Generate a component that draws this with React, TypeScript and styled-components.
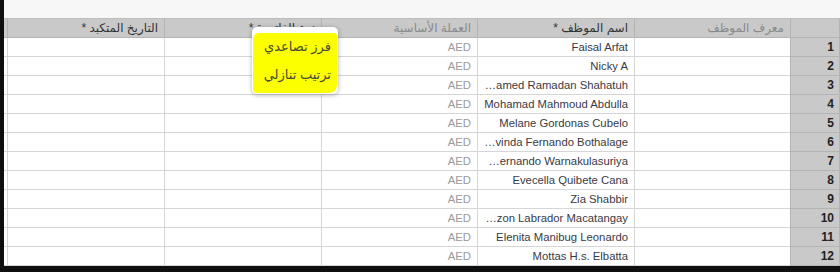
import React from 'react';
import styled, { createGlobalStyle } from 'styled-components';

const GlobalStyle = createGlobalStyle`
  html, body {
    margin: 0;
    padding: 0;
    background: #0f0f0f;
  }
  body {
    font-family: "Liberation Sans", "DejaVu Sans", Arial, sans-serif;
  }
`;

const Frame = styled.div`
  width: 840px;
  height: 272px;
  background: #0f0f0f;
  display: flex;
  justify-content: flex-end;
  align-items: flex-start;
`;

const Sheet = styled.div`
  position: relative;
  width: 836px;
  height: 266px;
  overflow: hidden;
  background: #f7f7f7;
  padding-top: 18px;
  box-sizing: border-box;
  direction: rtl;
`;

const Grid = styled.table`
  table-layout: fixed;
  border-collapse: collapse;
  width: 940px;
  direction: rtl;
  font-size: 12px;
`;

const HeadCell = styled.th<{ $muted?: boolean; $w: number }>`
  width: ${(p) => p.$w}px;
  height: 19px;
  padding: 0 6px;
  background: #c9c9c9;
  border: 1px solid #b4b4b4;
  border-top-color: #bdbdbd;
  text-align: right;
  font-weight: normal;
  font-size: 12px;
  color: ${(p) => (p.$muted ? '#8a8a8a' : '#333')};
  white-space: nowrap;
  overflow: hidden;
  box-sizing: border-box;
`;

const Cell = styled.td<{ $muted?: boolean }>`
  height: 19px;
  padding: 0 6px 0 5px;
  background: #fff;
  border: 1px solid #d6d6d6;
  text-align: right;
  font-size: 11.3px;
  color: ${(p) => (p.$muted ? '#9a9a9a' : '#3a3a44')};
  white-space: nowrap;
  overflow: hidden;
  text-overflow: ellipsis;
  box-sizing: border-box;
`;

const NumCell = styled.td`
  height: 19px;
  padding: 0 5px;
  background: #c9c9c9;
  border: 1px solid #b4b4b4;
  text-align: right;
  font-weight: bold;
  color: #222;
  box-sizing: border-box;
`;

const SortMenu = styled.div`
  position: absolute;
  left: 248px;
  top: 27px;
  width: 86px;
  height: 67px;
  background: #fff;
  border-radius: 5px;
  box-shadow: 0 1px 5px rgba(0, 0, 0, 0.3);
  padding: 6px 1px 1px;
  box-sizing: border-box;
  direction: rtl;
`;

const Highlight = styled.div`
  background: #fbff00;
  border-radius: 6px 3px 8px 4px;
  height: 100%;
  display: flex;
  flex-direction: column;
  padding: 4px 6px 0;
  box-sizing: border-box;
  gap: 8px;
`;

const MenuItem = styled.div`
  font-size: 13px;
  line-height: 20px;
  color: #4a4a3a;
  text-align: right;
`;

const names = [
  'Faisal Arfat',
  'Nicky A',
  'Mohamed Ramadan Shahatuh',
  'Mohamad Mahmoud Abdulla',
  'Melane Gordonas Cubelo',
  'Devinda Fernando Bothalage',
  'Rohan Fernando Warnakulasuriya',
  'Evecella Quibete Cana',
  'Zia Shabbir',
  'Jayzon Labrador Macatangay',
  'Elenita Manibug Leonardo',
  'Mottas H.s. Elbatta',
  'Ahmed Ali',
];

const columns = [
  { title: '', w: 49, muted: false },
  { title: 'معرف الموظف', w: 156, muted: true },
  { title: 'اسم الموظف *', w: 157, muted: false },
  { title: 'العملة الأساسية', w: 156, muted: true },
  { title: 'نوع الفاتورة *', w: 157, muted: false },
  { title: 'التاريخ المتكبد *', w: 157, muted: false },
  { title: '', w: 108, muted: false },
];

export default function App() {
  return (
    <>
      <GlobalStyle />
      <Frame>
        <Sheet>
          <Grid>
            <thead>
              <tr>
                {columns.map((c, idx) => (
                  <HeadCell key={idx} $w={c.w} $muted={c.muted}>
                    {c.title}
                  </HeadCell>
                ))}
              </tr>
            </thead>
            <tbody>
              {names.map((name, idx) => (
                <tr key={idx}>
                  <NumCell>{idx + 1}</NumCell>
                  <Cell />
                  <Cell>{name}</Cell>
                  <Cell $muted>AED</Cell>
                  <Cell />
                  <Cell />
                  <Cell />
                </tr>
              ))}
            </tbody>
          </Grid>
          <SortMenu>
            <Highlight>
              <MenuItem>فرز تصاعدي</MenuItem>
              <MenuItem>ترتيب تنازلي</MenuItem>
            </Highlight>
          </SortMenu>
        </Sheet>
      </Frame>
    </>
  );
}
